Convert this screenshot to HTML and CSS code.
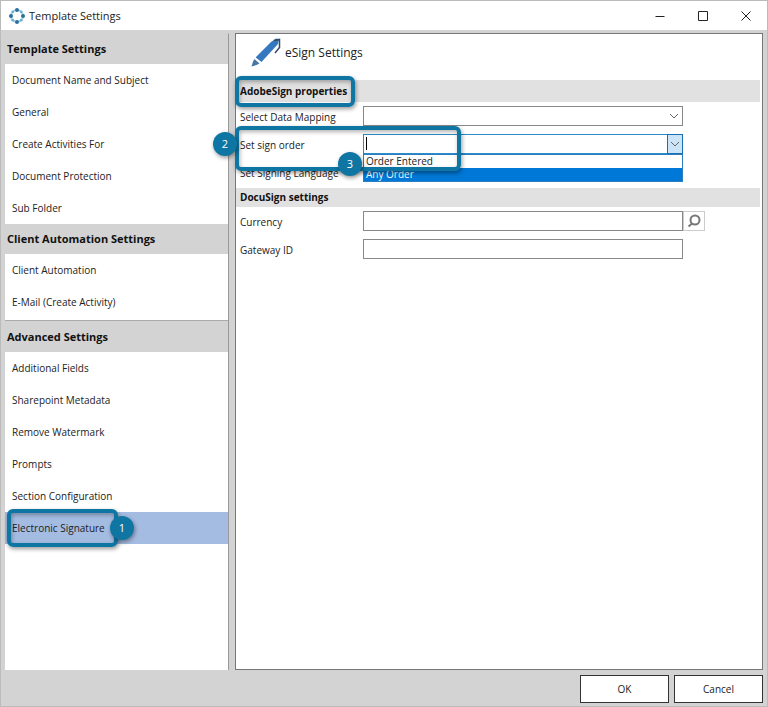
FILE: index.html
```
<!DOCTYPE html>
<html lang="en">
<head>
    <meta charset="UTF-8">
    <title>Template Settings</title>
    <meta name="viewport" content="width=device-width, initial-scale=1.0">
    <link rel="stylesheet" href="styles.css">
</head>
<body>
    <div class="window">
        <!-- Title bar -->
        <header class="titlebar">
            <svg class="app-icon" viewBox="0 0 16 16" width="16" height="16">
                <circle cx="8" cy="8" r="6" fill="none" stroke="#a9d3ea" stroke-width="2"/>
                <g fill="#2d6f9a">
                    <circle cx="8" cy="2" r="2"/>
                    <circle cx="14" cy="8" r="2"/>
                    <circle cx="8" cy="14" r="2"/>
                    <circle cx="2" cy="8" r="2"/>
                </g>
                <g fill="#6fb0d3">
                    <circle cx="3.8" cy="3.8" r="1.4"/>
                    <circle cx="12.2" cy="3.8" r="1.4"/>
                    <circle cx="3.8" cy="12.2" r="1.4"/>
                    <circle cx="12.2" cy="12.2" r="1.4"/>
                </g>
            </svg>
            <span class="titlebar-text">Template Settings</span>
            <div class="window-buttons">
                <button type="button" aria-label="Minimize">
                    <svg viewBox="0 0 12 12" width="12" height="12"><path d="M1.5 6.5h9"/></svg>
                </button>
                <button type="button" aria-label="Maximize">
                    <svg viewBox="0 0 12 12" width="12" height="12"><path d="M1.5 1.5h9v9h-9z"/></svg>
                </button>
                <button type="button" aria-label="Close">
                    <svg viewBox="0 0 12 12" width="12" height="12"><path d="M1.5 1.5l9 9M10.5 1.5l-9 9"/></svg>
                </button>
            </div>
        </header>

        <div class="content">
            <!-- Sidebar -->
            <nav class="sidebar">
                <h2>Template Settings</h2>
                <a href="#">Document Name and Subject</a>
                <a href="#">General</a>
                <a href="#">Create Activities For</a>
                <a href="#">Document Protection</a>
                <a href="#">Sub Folder</a>
                <h2>Client Automation Settings</h2>
                <a href="#">Client Automation</a>
                <a href="#">E-Mail (Create Activity)</a>
                <h2 class="divided">Advanced Settings</h2>
                <a href="#">Additional Fields</a>
                <a href="#">Sharepoint Metadata</a>
                <a href="#">Remove Watermark</a>
                <a href="#">Prompts</a>
                <a href="#">Section Configuration</a>
                <a href="#" class="active">Electronic Signature
                    <span class="callout callout-signature"><span class="badge">1</span></span>
                </a>
            </nav>

            <!-- Main panel -->
            <main class="panel">
                <div class="panel-title">
                    <svg viewBox="0 0 30 30" width="30" height="30">
                        <path d="M4.500 19.500L20 4l5-3.500L28 1l-1 5L10.500 24z" fill="#3478c0"/>
                        <path d="M3.500 21l5 4.500-3 1.500-5 1.500 1.500-5z" fill="#4a76a4"/>
                        <path d="M3.500 19.500l7 6" stroke="#fff" stroke-width="1.500"/>
                        <path d="M23 2.500l5.500-1v8L24 15" fill="none" stroke="#334a60" stroke-width="1.500"/>
                    </svg>
                    <h1>eSign Settings</h1>
                </div>

                <h3 class="section section-adobe">AdobeSign properties
                    <span class="callout callout-section"></span>
                </h3>
                <div class="row">
                    <label for="mapping">Select Data Mapping</label>
                    <div class="field">
                        <select id="mapping"><option></option></select>
                        <svg class="chevron" viewBox="0 0 10 6" width="10" height="6"><path d="M1 1l4 4 4-4"/></svg>
                    </div>
                </div>
                <div class="row">
                    <label for="order">Set sign order</label>
                    <div class="field combo">
                        <input type="text" id="order" role="combobox" aria-expanded="true" aria-controls="order-list">
                        <span class="caret"></span>
                        <button type="button" class="combo-button" aria-label="Show options">
                            <svg viewBox="0 0 10 6" width="10" height="6"><path d="M1 1l4 4 4-4"/></svg>
                        </button>
                        <ul class="combo-list" id="order-list" role="listbox">
                            <li role="option">Order Entered</li>
                            <li role="option" class="selected" aria-selected="true">Any Order</li>
                        </ul>
                    </div>
                    <span class="callout callout-order">
                        <span class="badge badge-row">2</span>
                        <span class="badge badge-list">3</span>
                    </span>
                </div>
                <div class="row">
                    <label for="language">Set Signing Language</label>
                    <div class="field">
                        <select id="language"><option></option></select>
                    </div>
                </div>

                <h3 class="section section-docusign">DocuSign settings</h3>
                <div class="row">
                    <label for="currency">Currency</label>
                    <div class="field">
                        <input type="text" id="currency">
                        <button type="button" class="search-button" aria-label="Search currency">
                            <svg viewBox="0 0 14 14" width="14" height="14">
                                <circle cx="8" cy="6" r="4.500"/>
                                <path d="M5 9.500l-3.500 3"/>
                            </svg>
                        </button>
                    </div>
                </div>
                <div class="row">
                    <label for="gateway">Gateway ID</label>
                    <div class="field">
                        <input type="text" id="gateway">
                    </div>
                </div>
            </main>
        </div>

        <!-- Footer buttons -->
        <footer class="footer">
            <button type="button">OK</button>
            <button type="button">Cancel</button>
        </footer>
    </div>
</body>
</html>
```

FILE: styles.css
```
* {
    box-sizing: border-box;
}

body {
    margin: 0;
    background-color: #d3d3d3;
    color: #222;
    font-family: 'Open Sans', 'Noto Sans', sans-serif;
    font-size: 10px;
}

button,
input,
select {
    margin: 0;
    font: inherit;
    color: inherit;
    border-radius: 0;
}

h1,
h2,
h3 {
    margin: 0;
}

.window {
    min-height: 100vh;
    display: flex;
    flex-direction: column;
    border: 1px solid #bbb;
}

/* Title bar */
.titlebar {
    height: 29px;
    display: flex;
    align-items: center;
    padding-left: 8px;
    background: #fff;
}

.titlebar-text {
    margin-left: 4px;
    font-size: 11px;
}

.window-buttons {
    margin-left: auto;
    display: flex;
}

.window-buttons button {
    width: 43px;
    height: 28px;
    padding: 0;
    display: flex;
    align-items: center;
    justify-content: center;
    background: none;
    border: none;
}

.window-buttons svg {
    fill: none;
    stroke: #222;
}

/* Sidebar and panel */
.content {
    flex: 1;
    display: flex;
    gap: 6px;
    padding: 3px 4px 0;
}

.sidebar {
    flex: 0 0 224px;
    background: #fff;
    border-top: 1px solid #d3d3d3;
    border-right: 1px solid #999;
}

.sidebar h2 {
    height: 30px;
    padding-left: 2px;
    line-height: 30px;
    font-size: 11px;
    background: #d3d3d3;
    color: #111;
}

.sidebar h2.divided {
    height: 32px;
    margin-top: 2px;
    line-height: 32px;
    border-top: 1px solid #aaa;
}

.sidebar a {
    display: block;
    height: 32px;
    padding-left: 7px;
    line-height: 32px;
    color: #222;
    text-decoration: none;
}

.sidebar a.active {
    position: relative;
    background: #a4bce2;
}

.panel {
    flex: 1;
    min-width: 0;
    background: #fff;
    border: 1px solid #777;
}

.panel-title {
    height: 46px;
    display: flex;
    align-items: flex-start;
    padding: 4px 0 0 15px;
}

.panel-title h1 {
    margin-left: 4px;
    font-size: 12px;
    line-height: 30px;
    font-weight: normal;
}

.section {
    height: 19px;
    margin: 0 2px 0 0;
    padding-left: 4px;
    line-height: 19px;
    font-size: 10px;
    background: #e1e1e1;
    color: #111;
}

.section-adobe {
    position: relative;
    height: 22px;
    line-height: 22px;
}

.section-docusign {
    margin-top: 2px;
}

/* Form rows */
.row {
    position: relative;
    height: 28px;
    display: flex;
    align-items: center;
    padding: 0 57px 0 4px;
}

.row label {
    flex: 0 0 123px;
    padding-top: 1px;
}

.field {
    position: relative;
    flex: 1;
    display: flex;
    padding-right: 22px;
}

.field input,
.field select {
    flex: 1;
    min-width: 0;
    height: 20px;
    padding: 0 4px;
    background: #fff;
    border: 1px solid #888;
    appearance: none;
    outline: none;
}

.chevron {
    position: absolute;
    top: 7px;
    right: 26px;
    pointer-events: none;
}

.chevron,
.combo-button svg {
    fill: none;
    stroke: #666;
}

/* Open drop-down */
.combo input {
    border-color: #2b8cc9;
    border-right: none;
}

.caret {
    position: absolute;
    top: 3px;
    left: 3px;
    width: 1px;
    height: 13px;
    background: #000;
}

.combo-button {
    width: 16px;
    height: 20px;
    padding: 0;
    display: flex;
    align-items: center;
    justify-content: center;
    background: #cce4f7;
    border: 1px solid #1a6fb0;
}

.combo-list {
    position: absolute;
    top: 20px;
    left: 0;
    right: 22px;
    z-index: 1;
    margin: 0;
    padding: 0;
    list-style: none;
    background: #fff;
    border: 1px solid #2b7fc0;
}

.combo-list li {
    height: 13px;
    padding-left: 2px;
    line-height: 13px;
}

.combo-list .selected {
    background: #0078d7;
    color: #fff;
}

/* Currency lookup */
.search-button {
    width: 22px;
    height: 20px;
    margin-right: -22px;
    padding: 0;
    display: flex;
    align-items: center;
    justify-content: center;
    background: #fff;
    border: 1px solid #ccc;
}

.search-button svg {
    fill: none;
    stroke: #777;
    stroke-width: 2;
}

/* Callouts */
.callout {
    position: absolute;
    z-index: 2;
    border: 4px solid #0f76a3;
    border-radius: 6px;
    box-shadow: 1px 2px 4px rgba(0, 0, 0, 0.4), inset 1px 2px 4px rgba(0, 0, 0, 0.3);
    pointer-events: none;
}

.callout-signature {
    top: -3px;
    left: 2px;
    width: 111px;
    height: 38px;
}

.callout-section {
    top: -4px;
    left: -1px;
    width: 120px;
    height: 31px;
}

.callout-order {
    top: -4px;
    left: -1px;
    width: 226px;
    height: 45px;
}

.badge {
    position: absolute;
    top: 3px;
    right: -20px;
    width: 24px;
    height: 24px;
    border-radius: 50%;
    background: #0f76a3;
    box-shadow: 1px 2px 4px rgba(0, 0, 0, 0.4);
    color: #fff;
    font-size: 11px;
    line-height: 24px;
    text-align: center;
}

.badge-row {
    top: 2px;
    left: -26px;
}

.badge-list {
    top: 22px;
    left: 99px;
}

/* Footer */
.footer {
    display: flex;
    justify-content: flex-end;
    gap: 5px;
    padding: 5px 4px 3px;
}

.footer button {
    width: 89px;
    height: 28px;
    padding: 0;
    background: #fff;
    border: 1px solid #333;
}
```
